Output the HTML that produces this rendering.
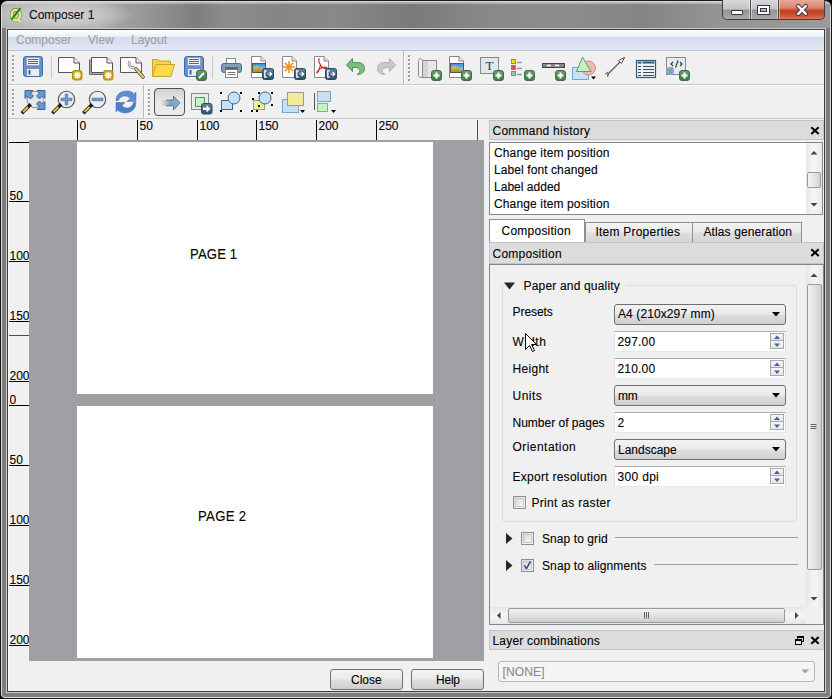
<!DOCTYPE html>
<html><head><meta charset="utf-8">
<style>
*{margin:0;padding:0;box-sizing:border-box}
html,body{width:832px;height:699px;overflow:hidden;background:#000}
body{position:relative;font-family:"Liberation Sans",sans-serif;font-size:12px;color:#000}
.a{position:absolute}
.t{position:absolute;white-space:nowrap;line-height:1;-webkit-text-stroke:0.1px currentColor}
#win{left:0;top:0;width:832px;height:699px;border:1px solid #161616;border-radius:7px 7px 5px 5px;
 background:#7e7e7e;box-shadow:inset 0 0 0 1px #dcdcdc}
#title{left:2px;top:2px;width:828px;height:26px;border-radius:5px 5px 0 0;overflow:hidden;
 background:linear-gradient(90deg,#b4b4b4 0px,#acacac 95px,#8f8f8f 160px,#7e7e7e 195px,#8d8d8d 225px,#858585 280px,#898989 330px,#7a7a7a 410px,#888888 480px,#8d8d8d 560px,#848484 640px,#959595 720px,#9a9a9a 828px)}
#title:before{content:"";position:absolute;left:0;top:0;right:0;height:2px;background:rgba(255,255,255,0.35)}
#glow{left:0;top:0;width:240px;height:28px;background:radial-gradient(ellipse 72px 17px at 60px 13px,rgba(212,212,212,1) 0,rgba(204,204,204,0.8) 50%,rgba(190,190,190,0) 100%)}
#client{left:7px;top:29px;width:818px;height:663px;border:1px solid #404040;background:#f0f0f0;box-shadow:0 0 0 1px #cacaca,inset 1px 0 0 #fafafa}
#menubar{left:8px;top:30px;width:816px;height:21px;border-bottom:1px solid #b9c2d8;
 background:linear-gradient(180deg,#fefefe 0,#f6f8fc 3px,#eceff8 6.5px,#d5dcee 7px,#d9dff0 11px,#dfe5f3 17px,#e2e7f4 20px)}
.menu{color:#a0a0a0;font-size:12px;top:34px}
.tb{left:8px;width:816px;border-bottom:1px solid #c8c8c8;background:#f0f0f0}
.grip{width:3px;background:repeating-linear-gradient(180deg,#a8a8a8 0,#a8a8a8 1px,#f0f0f0 1px,#f0f0f0 4px)}
.sep{width:2px;border-left:1px solid #c6c6c6;border-right:1px solid #fff}
svg{position:absolute;overflow:visible}
</style></head><body>
<div id="win" class="a"></div>
<div id="title" class="a"><div id="glow" class="a"></div></div>
<!-- qgis logo -->
<svg style="left:0;top:0" width="32" height="28" viewBox="0 0 32 28">
 <ellipse cx="15.8" cy="15.2" rx="4.2" ry="5.3" fill="none" stroke="#3a3a20" stroke-width="3.6" opacity="0.55"/>
 <ellipse cx="15.8" cy="15.2" rx="4.2" ry="5.3" fill="none" stroke="#f0f070" stroke-width="2.4"/>
 <path d="M17 19.5L20.5 21.5" stroke="#f0f070" stroke-width="2"/>
 <path d="M11.5 19.5L20.5 8" stroke="#118a11" stroke-width="2"/>
</svg>
<div class="t" style="left:29px;top:9px;font-size:12px;color:#0c0c20">Composer 1</div>
<!-- window buttons -->
<div class="a" style="left:722px;top:0px;width:103px;height:20px;border:1px solid #3e3e3e;border-top:none;border-radius:0 0 5px 5px;overflow:hidden;background:#4a4a4a">
 <div class="a" style="left:0;top:0;width:27px;height:19px;border-right:1px solid rgba(255,255,255,0.5);background:linear-gradient(180deg,#d8d8d8 0,#c4c4c4 45%,#959595 55%,#a8a8a8 100%)"></div>
 <div class="a" style="left:28px;top:0;width:27px;height:19px;border-left:1px solid rgba(255,255,255,0.5);border-right:1px solid rgba(255,255,255,0.4);background:linear-gradient(180deg,#d8d8d8 0,#c4c4c4 45%,#959595 55%,#a8a8a8 100%)"></div>
 <div class="a" style="left:56px;top:0;width:47px;height:19px;border-left:1px solid rgba(255,220,210,0.5);background:linear-gradient(180deg,#e8a898 0,#d98870 40%,#c23c1c 58%,#cc5a3c 85%,#d87a5e 100%)"></div>
</div>
<div class="a" style="left:731px;top:10px;width:12px;height:5px;border:1px solid #35354a;background:#fff;border-radius:1px"></div>
<div class="a" style="left:757px;top:5px;width:13px;height:10px;border:1px solid #35354a;background:#fff"></div>
<div class="a" style="left:760px;top:8px;width:7px;height:4px;border:1px solid #35354a;background:#b8b8b8"></div>
<svg style="left:796px;top:5px" width="12" height="10" viewBox="0 0 12 10">
 <path d="M2.2 1.2L9.8 8.8M9.8 1.2L2.2 8.8" stroke="#33334a" stroke-width="4.4" stroke-linecap="round"/>
 <path d="M2.2 1.2L9.8 8.8M9.8 1.2L2.2 8.8" stroke="#fff" stroke-width="2.4" stroke-linecap="round"/>
</svg>

<div id="client" class="a"></div>
<div id="menubar" class="a"></div>
<div class="t menu" style="left:16px">Composer</div>
<div class="t menu" style="left:88px">View</div>
<div class="t menu" style="left:131px">Layout</div>

<!-- toolbars -->
<div class="a tb" style="top:51px;height:34px"></div>
<div class="a tb" style="top:85px;height:34px;border-top:1px solid #fff"></div>

<svg style="left:0;top:0" width="832" height="120" viewBox="0 0 832 120">
<defs>
 <linearGradient id="gBadge" x1="0" y1="0" x2="0" y2="1"><stop offset="0" stop-color="#6f9d74"/><stop offset="1" stop-color="#3f7a47"/></linearGradient>
 <linearGradient id="gExp" x1="0" y1="0" x2="0" y2="1"><stop offset="0" stop-color="#5f819b"/><stop offset="1" stop-color="#2f506a"/></linearGradient>
 <linearGradient id="gSky" x1="0" y1="0" x2="0" y2="1"><stop offset="0" stop-color="#3b8fd8"/><stop offset="1" stop-color="#bfe2f6"/></linearGradient>
 <linearGradient id="gHill" x1="0" y1="0" x2="0" y2="1"><stop offset="0" stop-color="#d8c070"/><stop offset="1" stop-color="#b09028"/></linearGradient>
 <linearGradient id="gArrow" x1="0" y1="0" x2="1" y2="0"><stop offset="0" stop-color="#5a87a6" stop-opacity="0"/><stop offset="0.55" stop-color="#5a87a6"/><stop offset="1" stop-color="#4f7896"/></linearGradient>
 <linearGradient id="gChk" x1="0" y1="0" x2="0" y2="1"><stop offset="0" stop-color="#cfcfcf"/><stop offset="0.45" stop-color="#e6e6e6"/><stop offset="1" stop-color="#ececec"/></linearGradient>
 <g id="plus"><rect x="0.5" y="0.5" width="10" height="10" rx="2.5" fill="url(#gBadge)" stroke="#3b6e43"/><path d="M5.5 2.5v6M2.5 5.5h6" stroke="#fff" stroke-width="2.2"/></g>
 <g id="exp"><rect x="0.5" y="0.5" width="11" height="11" rx="2" fill="url(#gExp)" stroke="#2a4a60"/><path d="M4.8 2.8H2.8V9.2H4.8" stroke="#fff" stroke-width="1.3" fill="none"/><path d="M5.5 6H9.5M7.5 3.8L9.7 6L7.5 8.2" stroke="#fff" stroke-width="1.2" fill="none"/></g>
 <g id="page"><path d="M0.5 0.5H10L14.5 5V21.5H0.5Z" fill="#fff" stroke="#888"/><path d="M10 0.5V5H14.5" fill="#e8e8e8" stroke="#888"/></g>
 <g id="ast"><path d="M0 -3.6V3.6M-3.6 0H3.6M-2.5 -2.5L2.5 2.5M2.5 -2.5L-2.5 2.5" stroke="#fff" stroke-width="1.5"/></g>
</defs>
<!-- grips -->
<rect x="12" y="55" width="2" height="2" fill="#b8b8b8"/><rect x="13" y="55" width="1" height="1" fill="#8a8a8a"/><rect x="12" y="56" width="1" height="1" fill="#8a8a8a"/><rect x="12" y="59" width="2" height="2" fill="#b8b8b8"/><rect x="13" y="59" width="1" height="1" fill="#8a8a8a"/><rect x="12" y="60" width="1" height="1" fill="#8a8a8a"/><rect x="12" y="63" width="2" height="2" fill="#b8b8b8"/><rect x="13" y="63" width="1" height="1" fill="#8a8a8a"/><rect x="12" y="64" width="1" height="1" fill="#8a8a8a"/><rect x="12" y="67" width="2" height="2" fill="#b8b8b8"/><rect x="13" y="67" width="1" height="1" fill="#8a8a8a"/><rect x="12" y="68" width="1" height="1" fill="#8a8a8a"/><rect x="12" y="71" width="2" height="2" fill="#b8b8b8"/><rect x="13" y="71" width="1" height="1" fill="#8a8a8a"/><rect x="12" y="72" width="1" height="1" fill="#8a8a8a"/><rect x="12" y="75" width="2" height="2" fill="#b8b8b8"/><rect x="13" y="75" width="1" height="1" fill="#8a8a8a"/><rect x="12" y="76" width="1" height="1" fill="#8a8a8a"/><rect x="12" y="79" width="2" height="2" fill="#b8b8b8"/><rect x="13" y="79" width="1" height="1" fill="#8a8a8a"/><rect x="12" y="80" width="1" height="1" fill="#8a8a8a"/>
<rect x="408" y="55" width="2" height="2" fill="#b8b8b8"/><rect x="409" y="55" width="1" height="1" fill="#8a8a8a"/><rect x="408" y="56" width="1" height="1" fill="#8a8a8a"/><rect x="408" y="59" width="2" height="2" fill="#b8b8b8"/><rect x="409" y="59" width="1" height="1" fill="#8a8a8a"/><rect x="408" y="60" width="1" height="1" fill="#8a8a8a"/><rect x="408" y="63" width="2" height="2" fill="#b8b8b8"/><rect x="409" y="63" width="1" height="1" fill="#8a8a8a"/><rect x="408" y="64" width="1" height="1" fill="#8a8a8a"/><rect x="408" y="67" width="2" height="2" fill="#b8b8b8"/><rect x="409" y="67" width="1" height="1" fill="#8a8a8a"/><rect x="408" y="68" width="1" height="1" fill="#8a8a8a"/><rect x="408" y="71" width="2" height="2" fill="#b8b8b8"/><rect x="409" y="71" width="1" height="1" fill="#8a8a8a"/><rect x="408" y="72" width="1" height="1" fill="#8a8a8a"/><rect x="408" y="75" width="2" height="2" fill="#b8b8b8"/><rect x="409" y="75" width="1" height="1" fill="#8a8a8a"/><rect x="408" y="76" width="1" height="1" fill="#8a8a8a"/><rect x="408" y="79" width="2" height="2" fill="#b8b8b8"/><rect x="409" y="79" width="1" height="1" fill="#8a8a8a"/><rect x="408" y="80" width="1" height="1" fill="#8a8a8a"/>
<rect x="12" y="89" width="2" height="2" fill="#b8b8b8"/><rect x="13" y="89" width="1" height="1" fill="#8a8a8a"/><rect x="12" y="90" width="1" height="1" fill="#8a8a8a"/><rect x="12" y="93" width="2" height="2" fill="#b8b8b8"/><rect x="13" y="93" width="1" height="1" fill="#8a8a8a"/><rect x="12" y="94" width="1" height="1" fill="#8a8a8a"/><rect x="12" y="97" width="2" height="2" fill="#b8b8b8"/><rect x="13" y="97" width="1" height="1" fill="#8a8a8a"/><rect x="12" y="98" width="1" height="1" fill="#8a8a8a"/><rect x="12" y="101" width="2" height="2" fill="#b8b8b8"/><rect x="13" y="101" width="1" height="1" fill="#8a8a8a"/><rect x="12" y="102" width="1" height="1" fill="#8a8a8a"/><rect x="12" y="105" width="2" height="2" fill="#b8b8b8"/><rect x="13" y="105" width="1" height="1" fill="#8a8a8a"/><rect x="12" y="106" width="1" height="1" fill="#8a8a8a"/><rect x="12" y="109" width="2" height="2" fill="#b8b8b8"/><rect x="13" y="109" width="1" height="1" fill="#8a8a8a"/><rect x="12" y="110" width="1" height="1" fill="#8a8a8a"/><rect x="12" y="113" width="2" height="2" fill="#b8b8b8"/><rect x="13" y="113" width="1" height="1" fill="#8a8a8a"/><rect x="12" y="114" width="1" height="1" fill="#8a8a8a"/>
<rect x="148" y="89" width="2" height="2" fill="#b8b8b8"/><rect x="149" y="89" width="1" height="1" fill="#8a8a8a"/><rect x="148" y="90" width="1" height="1" fill="#8a8a8a"/><rect x="148" y="93" width="2" height="2" fill="#b8b8b8"/><rect x="149" y="93" width="1" height="1" fill="#8a8a8a"/><rect x="148" y="94" width="1" height="1" fill="#8a8a8a"/><rect x="148" y="97" width="2" height="2" fill="#b8b8b8"/><rect x="149" y="97" width="1" height="1" fill="#8a8a8a"/><rect x="148" y="98" width="1" height="1" fill="#8a8a8a"/><rect x="148" y="101" width="2" height="2" fill="#b8b8b8"/><rect x="149" y="101" width="1" height="1" fill="#8a8a8a"/><rect x="148" y="102" width="1" height="1" fill="#8a8a8a"/><rect x="148" y="105" width="2" height="2" fill="#b8b8b8"/><rect x="149" y="105" width="1" height="1" fill="#8a8a8a"/><rect x="148" y="106" width="1" height="1" fill="#8a8a8a"/><rect x="148" y="109" width="2" height="2" fill="#b8b8b8"/><rect x="149" y="109" width="1" height="1" fill="#8a8a8a"/><rect x="148" y="110" width="1" height="1" fill="#8a8a8a"/><rect x="148" y="113" width="2" height="2" fill="#b8b8b8"/><rect x="149" y="113" width="1" height="1" fill="#8a8a8a"/><rect x="148" y="114" width="1" height="1" fill="#8a8a8a"/>
<!-- separators -->
<path d="M51.5 56v23M212.5 56v23" stroke="#c9c9c9"/>
<path d="M403.5 51v33M143.5 85v33" stroke="#b9b9b9"/><path d="M404.5 51v33M144.5 85v33" stroke="#fff"/>
<!-- save -->
<g id="save"><rect x="23.5" y="56.5" width="19" height="20" rx="2.5" fill="#6892c6" stroke="#3f6da6"/>
<rect x="26.5" y="57.5" width="13" height="8" fill="#f2f2f2" stroke="#8ca4c0"/>
<path d="M28 59.5h10M28 61.5h10M28 63.5h10" stroke="#555" stroke-width="0.9"/>
<rect x="27" y="69" width="12" height="7" fill="#ececec"/><rect x="28.5" y="70" width="2" height="4.5" fill="#36628f"/></g>
<!-- new composer -->
<path d="M58.5 57.5H74L79.5 63V72.5H58.5Z" fill="#fff" stroke="#555"/><path d="M74 57.5V63H79.5" fill="#eee" stroke="#555"/>
<g transform="translate(72,70)"><rect x="0.5" y="0.5" width="9.5" height="9.5" rx="2" fill="#c9a21a" stroke="#b5900f"/><g transform="translate(5.25,5.25)"><use href="#ast"/></g></g>
<!-- duplicate -->
<path d="M89.5 59.5V74.5H104" fill="none" stroke="#666" stroke-width="1"/><path d="M90.5 59.5V73.5H104" fill="none" stroke="#aaa"/>
<path d="M91.5 57.5H107L112.5 63V72.5H91.5Z" fill="#fff" stroke="#555"/><path d="M107 57.5V63H112.5" fill="#eee" stroke="#555"/>
<g transform="translate(103,70)"><rect x="0.5" y="0.5" width="9.5" height="9.5" rx="2" fill="#c9a21a" stroke="#b5900f"/><g transform="translate(5.25,5.25)"><use href="#ast"/></g></g>
<!-- manager -->
<path d="M120.5 57.5H136L141.5 63V72.5H120.5Z" fill="#fff" stroke="#555"/><path d="M136 57.5V63H141.5" fill="#eee" stroke="#555"/>
<path d="M136 69L143 77" stroke="#444" stroke-width="3.6" stroke-linecap="round"/><path d="M136 69L143 77" stroke="#e8cc6a" stroke-width="2.2" stroke-linecap="round"/>
<path d="M130 61.5a3.5 3.5 0 1 0 5 5" fill="none" stroke="#777" stroke-width="2.6"/><path d="M130 61.5a3.5 3.5 0 1 0 5 5" fill="none" stroke="#e6e6e6" stroke-width="1.3"/>
<!-- open folder -->
<path d="M152.5 76.5V59.5H158L159 61H170.5V64" fill="#f5d34a" stroke="#c9a62a"/>
<path d="M152.5 76.5L156 64.5H174.5L171 76.5Z" fill="#ffd84c" stroke="#c9a62a"/>
<!-- save as template -->
<rect x="184.5" y="56.5" width="19" height="20" rx="2.5" fill="#6892c6" stroke="#3f6da6"/>
<rect x="187.5" y="57.5" width="13" height="8" fill="#f2f2f2" stroke="#8ca4c0"/>
<path d="M189 59.5h10M189 61.5h10M189 63.5h10" stroke="#555" stroke-width="0.9"/>
<rect x="188" y="69" width="12" height="7" fill="#ececec"/><rect x="189.5" y="70" width="2" height="4.5" fill="#36628f"/>
<rect x="196.5" y="70.5" width="10" height="10" rx="2.5" fill="url(#gBadge)" stroke="#3b6e43"/><path d="M199 78L204 73" stroke="#fff" stroke-width="1.8"/>
<!-- print -->
<rect x="226.5" y="58.5" width="9" height="6" fill="#fff" stroke="#888"/>
<rect x="221.5" y="63.5" width="20" height="9" rx="2.5" fill="#7e9dba" stroke="#4f6f8f"/>
<rect x="225.5" y="69.5" width="12" height="8" fill="#fff" stroke="#888"/><path d="M227.5 72.5h8M227.5 74.5h8" stroke="#777"/>
<rect x="225" y="67" width="13" height="2.5" fill="#666"/>
<!-- export image -->
<g transform="translate(251,56)"><use href="#page"/><rect x="1" y="7" width="14" height="10" fill="#555"/><rect x="2" y="8" width="12" height="8" fill="url(#gSky)"/><path d="M2 11.5L5.5 9.5L11 13L14 14V16H2Z" fill="url(#gHill)"/></g>
<g transform="translate(262,68)"><use href="#exp"/></g>
<!-- export svg -->
<g transform="translate(282,56)"><use href="#page"/><g transform="translate(7,11)"><path d="M0 -6V6M-6 0H6M-4.2 -4.2L4.2 4.2M4.2 -4.2L-4.2 4.2" stroke="#e8951a" stroke-width="1.6"/><circle r="2" fill="#e8951a"/></g></g>
<g transform="translate(294,68)"><use href="#exp"/></g>
<!-- export pdf -->
<g transform="translate(314,56)"><use href="#page"/><path d="M5.5 2.5C3.5 4 6 9 8 11C9.5 12.5 12 13 13 12C12 10.5 8 11 5 13.5C3 15.5 2.5 17 3 17C4.5 16 6 11 6.5 8" fill="none" stroke="#c0282a" stroke-width="1.1"/></g>
<g transform="translate(325,68)"><use href="#exp"/></g>
<!-- undo -->
<path d="M346.5 65L352.5 58.5V62.5H358C362 62.5 364.5 65 364.5 68.5C364.5 72 362 74.5 357 74.5C360 73 360.5 70.5 359 69C358 68 356.5 67.5 355 67.5H352.5V71.5Z" fill="#7dbb80" stroke="#4f9455"/>
<!-- redo -->
<path d="M395.5 65L389.5 58.5V62.5H384C380 62.5 377.5 65 377.5 68.5C377.5 72 380 74.5 385 74.5C382 73 381.5 70.5 383 69C384 68 385.5 67.5 387 67.5H389.5V71.5Z" fill="#c8c8c8" stroke="#b0b0b0"/>
<!-- add map -->
<path d="M421 60.5H436.5V77.5H422" fill="#e7e7e7" stroke="#888"/>
<rect x="423" y="61" width="5" height="16" fill="#d4d4d4"/>
<path d="M418.5 61.5C418.5 57.5 422.5 57.5 422.5 61.5V76C422.5 78 418.5 78 418.5 75.5Z" fill="#f4f4f4" stroke="#888"/>
<g transform="translate(431,70)"><use href="#plus"/></g>
<!-- add picture -->
<g transform="translate(449,56)"><use href="#page"/><rect x="1" y="7" width="14" height="10" fill="#555"/><rect x="2" y="8" width="12" height="8" fill="url(#gSky)"/><path d="M2 11.5L5.5 9.5L11 13L14 14V16H2Z" fill="url(#gHill)"/></g>
<g transform="translate(461,70)"><use href="#plus"/></g>
<!-- add label -->
<rect x="480.5" y="57.5" width="18" height="16" fill="#dfe7f0" stroke="#888"/>
<text x="489.5" y="70" font-family="Liberation Serif" font-size="13" text-anchor="middle" fill="#333">T</text>
<g transform="translate(493,70)"><use href="#plus"/></g>
<!-- add legend -->
<rect x="511.5" y="59.5" width="4" height="4" fill="#f4e100" stroke="#888"/>
<rect x="511.5" y="65.5" width="4" height="4" fill="#e05050" stroke="#888"/>
<rect x="511.5" y="71.5" width="4" height="4" fill="#90d090" stroke="#888"/>
<path d="M517 62.5h5M517 68.5h5M517 74.5h5" stroke="#999" stroke-width="1.5"/>
<g transform="translate(524,70)"><use href="#plus"/></g>
<!-- add scalebar -->
<rect x="542.5" y="63.5" width="22" height="4" fill="#888" stroke="#444"/><path d="M547 65.5h4M555 65.5h4" stroke="#fff" stroke-width="1.6"/>
<g transform="translate(555,70)"><use href="#plus"/></g>
<!-- add shapes -->
<rect x="572.5" y="67.5" width="16" height="12" fill="#c6e0f4" stroke="#7aa4c8"/>
<circle cx="588.5" cy="68" r="7" fill="#f6b4b4" stroke="#d88888"/>
<path d="M582.5 57L576.5 71.5H591Z" fill="#c6f0c0" stroke="#62a060"/>
<path d="M591 76.5h5l-2.5 3z" fill="#000"/>
<!-- arrow -->
<path d="M607 75L624.5 57.5" stroke="#555" stroke-width="1.1"/>
<path d="M624.5 57.5L618.5 60.5L621.5 63.5Z" fill="#eee" stroke="#555"/>
<path d="M605 74l3 -2M607.5 77l1-3" stroke="#555"/>
<!-- table -->
<rect x="636.5" y="60.5" width="19" height="17" fill="#eef2f6" stroke="#3c5a72" stroke-width="1.2"/>
<rect x="637" y="61" width="18" height="3" fill="#9cc6e6"/><path d="M638 62.5h3M643 62.5h11" stroke="#30506a" stroke-width="1.4"/>
<path d="M638 66.5h3M643 66.5h11M638 69.5h3M643 69.5h11M638 72.5h3M643 72.5h11M638 75.5h3M643 75.5h11" stroke="#30506a" stroke-width="1"/>
<!-- html -->
<rect x="666.5" y="57.5" width="19" height="17" fill="#e4ebf2" stroke="#8a8a8a"/>
<path d="M673 62l-2 2 2 2M680 62l2 2-2 2M678 60.5l-2.5 7" stroke="#333" stroke-width="1.1" fill="none"/>
<circle cx="670" cy="71" r="4" fill="#9a9af0"/><path d="M667 69c2 0 2 2 3 2s1-3 3-3M669 74c1-1 2-2 3-1" stroke="#5cbc5c" stroke-width="1.6" fill="none"/>
<g transform="translate(679,70)"><use href="#plus"/></g>

<!-- toolbar 2 -->
<!-- zoom full -->
<circle cx="35.2" cy="99.5" r="8.2" fill="#e8e8e8" stroke="#8a8a8a" stroke-width="1"/>
<path d="M25 90.5H33L30.5 93L33.5 96L30.5 99L27.5 96L25 98.5Z" fill="#6a98cc" stroke="#2f5f94" stroke-width="0.9" stroke-linejoin="round"/>
<path d="M45 90.5H37L39.5 93L36.5 96L39.5 99L42.5 96L45 98.5Z" fill="#6a98cc" stroke="#2f5f94" stroke-width="0.9" stroke-linejoin="round"/>
<path d="M45 109.5H37L39.5 107L36.5 104L39.5 101L42.5 104L45 101.5Z" fill="#6a98cc" stroke="#2f5f94" stroke-width="0.9" stroke-linejoin="round"/>
<path d="M29.5 105.5L23 112" stroke="#1a1a1a" stroke-width="3.4" stroke-linecap="square"/><path d="M28 107L23 112" stroke="#f2c832" stroke-width="1.8"/>
<!-- zoom in -->
<circle cx="66.5" cy="99.5" r="8.2" fill="#eeeeee" stroke="#555" stroke-width="1.1"/>
<path d="M61 98.2H65.2V94H67.8V98.2H72V100.8H67.8V105H65.2V100.8H61Z" fill="#6a98cc" stroke="#3f6fa6" stroke-width="0.6"/>
<path d="M60 105.5L53.5 112" stroke="#1a1a1a" stroke-width="3.4" stroke-linecap="square"/><path d="M58.5 107L53.5 112" stroke="#f2c832" stroke-width="1.8"/>
<!-- zoom out -->
<circle cx="97.5" cy="99.5" r="8.2" fill="#eeeeee" stroke="#555" stroke-width="1.1"/>
<path d="M92 98.2H103V100.8H92Z" fill="#6a98cc" stroke="#3f6fa6" stroke-width="0.6"/>
<path d="M91 105.5L84.5 112" stroke="#1a1a1a" stroke-width="3.4" stroke-linecap="square"/><path d="M89.5 107L84.5 112" stroke="#f2c832" stroke-width="1.8"/>
<!-- refresh -->
<path d="M116 100.5C116 94 121 91 127 91C130.5 91 133 92.5 134.5 94L136 92V101.5H127L130 98.5C129 97 127.5 96 125 96C121.5 96 119.5 98 118.5 100.5Z" fill="#5b8fd0" stroke="#3d6fb0" stroke-width="0.5"/>
<path d="M136 102.5C136 109 131 113 125 113C121.5 113 119 111.5 117.5 110L116 112V102.5H125L122 105.5C123 107 124.5 108 127 108C130.5 108 132.5 106 133.5 102.5Z" fill="#4a80c4" stroke="#3d6fb0" stroke-width="0.5"/>
<!-- select (checked) -->
<rect x="154.5" y="88.5" width="30" height="27" rx="3.5" fill="url(#gChk)" stroke="#505050"/>
<defs><linearGradient id="gArr2" x1="0" y1="0" x2="1" y2="0"><stop offset="0" stop-color="#7fa3bf" stop-opacity="0"/><stop offset="0.5" stop-color="#7fa3bf"/><stop offset="1" stop-color="#8eb0c8"/></linearGradient></defs>
<path d="M161 100H173.5V96L180 103L173.5 110V105.8H161Z" fill="url(#gArr2)"/>
<path d="M166 100H173.5V96L180 103L173.5 110V105.8H166" fill="none" stroke="#3f6580" stroke-width="0.9" stroke-opacity="0.85"/>
<!-- move content -->
<rect x="191.5" y="93.5" width="17" height="16" fill="#ececec" stroke="#8a8a8a"/>
<rect x="195.5" y="97.5" width="9" height="9" fill="#c4f4c4" stroke="#5f905f"/>
<rect x="201.5" y="103.5" width="10.5" height="10.5" rx="2" fill="url(#gExp)" stroke="#2a4a60"/>
<path d="M203 107.5h3.5v-2.5l4 3.8-4 3.8v-2.5h-3.5z" fill="#fff"/>
<!-- select all -->
<rect x="221.5" y="100.5" width="11" height="9" fill="#c6e0f4" stroke="#3e6888"/>
<circle cx="234" cy="98" r="6" fill="#c6e0f4" stroke="#3e6888"/>
<path d="M220 92h2v2h-2zM240 92h2v2h-2zM220 110h2v2h-2zM240 110h2v2h-2z" fill="#000"/>
<!-- select2 -->
<rect x="253.5" y="100.5" width="11" height="9" fill="#f0ec9a" stroke="#999"/>
<circle cx="265" cy="98" r="6" fill="#c6e0f4" stroke="#3e6888"/>
<path d="M252 98h2v2h-2zM258 105h2v2h-2zM251 110h2v2h-2zM271 92h2v2h-2zM258 92h2v2h-2zM271 104h2v2h-2zM256 110h2v2h-2z" fill="#000"/>
<!-- raise -->
<rect x="282.5" y="99.5" width="16" height="13" fill="#c6e0f4" stroke="#7aa4c8"/>
<rect x="287.5" y="92.5" width="16" height="13" fill="#f0ec9a" stroke="#999"/>
<path d="M300 110h5l-2.5 3z" fill="#000"/>
<!-- align -->
<path d="M314.5 93v17" stroke="#555"/>
<rect x="317.5" y="91.5" width="13" height="10" fill="#c6e0f4" stroke="#7aa4c8"/>
<rect x="317.5" y="103.5" width="10" height="8" fill="#c6f4c6" stroke="#7ab87a"/>
<path d="M331 110h5l-2.5 3z" fill="#000"/>
</svg>

<div class="a" style="left:29px;top:140px;width:455px;height:521px;background:#a0a0a4"></div>
<div class="a" style="left:77px;top:142px;width:356px;height:252px;background:#fff"></div>
<div class="a" style="left:77px;top:406px;width:356px;height:252px;background:#fff"></div>
<svg style="left:0;top:0" width="832" height="699" viewBox="0 0 832 699">
<path d="M77.5 120V140" stroke="#000"/>
<path d="M137.5 120V140" stroke="#000"/>
<path d="M197.5 120V140" stroke="#000"/>
<path d="M256.5 120V140" stroke="#000"/>
<path d="M316.5 120V140" stroke="#000"/>
<path d="M376.5 120V140" stroke="#000"/>
<path d="M477.5 120V140" stroke="#f00"/>
<path d="M9 142.5H29" stroke="#000"/>
<path d="M9 201.5H29" stroke="#000"/>
<path d="M9 261.5H29" stroke="#000"/>
<path d="M9 321.5H29" stroke="#000"/>
<path d="M9 381.5H29" stroke="#000"/>
<path d="M9 405.5H29" stroke="#000"/>
<path d="M9 465.5H29" stroke="#000"/>
<path d="M9 525.5H29" stroke="#000"/>
<path d="M9 585.5H29" stroke="#000"/>
<path d="M9 645.5H29" stroke="#000"/>
<path d="M9 335.5H29" stroke="#f00"/>
</svg>
<div class="t" style="left:79.5px;top:120.00px;font-size:12px;color:#000;">0</div>
<div class="t" style="left:139.5px;top:120.00px;font-size:12px;color:#000;">50</div>
<div class="t" style="left:199.5px;top:120.00px;font-size:12px;color:#000;">100</div>
<div class="t" style="left:258.5px;top:120.00px;font-size:12px;color:#000;">150</div>
<div class="t" style="left:318.5px;top:120.00px;font-size:12px;color:#000;">200</div>
<div class="t" style="left:378.5px;top:120.00px;font-size:12px;color:#000;">250</div>
<div class="t" style="left:9.5px;top:190.00px;font-size:12px;color:#000;width:19.5px;overflow:hidden">50</div>
<div class="t" style="left:9.5px;top:250.00px;font-size:12px;color:#000;width:19.5px;overflow:hidden">100</div>
<div class="t" style="left:9.5px;top:310.00px;font-size:12px;color:#000;width:19.5px;overflow:hidden">150</div>
<div class="t" style="left:9.5px;top:370.00px;font-size:12px;color:#000;width:19.5px;overflow:hidden">200</div>
<div class="t" style="left:9.5px;top:394.00px;font-size:12px;color:#000;width:19.5px;overflow:hidden">0</div>
<div class="t" style="left:9.5px;top:454.00px;font-size:12px;color:#000;width:19.5px;overflow:hidden">50</div>
<div class="t" style="left:9.5px;top:514.00px;font-size:12px;color:#000;width:19.5px;overflow:hidden">100</div>
<div class="t" style="left:9.5px;top:574.00px;font-size:12px;color:#000;width:19.5px;overflow:hidden">150</div>
<div class="t" style="left:9.5px;top:634.00px;font-size:12px;color:#000;width:19.5px;overflow:hidden">200</div>
<div class="t" style="left:189.5px;top:246.00px;font-size:15px;color:#000;transform:scaleX(0.88);transform-origin:0 0;letter-spacing:0.1px">PAGE 1</div>
<div class="t" style="left:198.3px;top:508.00px;font-size:15px;color:#000;transform:scaleX(0.88);transform-origin:0 0;letter-spacing:0.3px">PAGE 2</div>
<div class="a" style="left:489px;top:120px;width:335px;height:20px;background:#dcdcdc;border:1px solid #c4c4c4"></div>
<div class="t" style="left:492.5px;top:125.00px;font-size:12px;color:#000;letter-spacing:0.24px;">Command history</div>
<svg style="left:0;top:0" width="832" height="699" viewBox="0 0 832 699"><path d="M811.3 127.19999999999999L818.7 134.0M818.7 127.19999999999999L811.3 134.0" stroke="#000" stroke-width="2"/></svg>
<div class="a" style="left:489px;top:142px;width:334px;height:73px;background:#fff;border:1px solid #828790"></div>
<div class="t" style="left:494px;top:147.00px;font-size:12px;color:#000;letter-spacing:0.14px;">Change item position</div>
<div class="t" style="left:494px;top:163.85px;font-size:12px;color:#000;letter-spacing:0.09px;">Label font changed</div>
<div class="t" style="left:494px;top:180.70px;font-size:12px;color:#000;letter-spacing:0.02px;">Label added</div>
<div class="t" style="left:494px;top:197.55px;font-size:12px;color:#000;letter-spacing:0.14px;">Change item position</div>
<div class="a" style="left:806px;top:143px;width:16px;height:71px;background:linear-gradient(90deg,#e8e8e8,#f4f4f4 40%,#f4f4f4 60%,#e8e8e8)"></div>
<div class="a" style="left:807px;top:172px;width:14px;height:16px;background:linear-gradient(90deg,#f4f4f4,#e6e6e6 50%,#d2d2d2);border:1px solid #9a9a9a;border-radius:2px"></div>
<svg style="left:0;top:0" width="832" height="699" viewBox="0 0 832 699"><path d="M810.5 154.5h7l-3.5 -3.5z" fill="#404040"/><path d="M810.5 203h7l-3.5 3.5z" fill="#404040"/></svg>
<div class="a" style="left:585px;top:222px;width:108px;height:20px;background:linear-gradient(180deg,#f3f3f3 0,#ebebeb 45%,#dddddd 55%,#d5d5d5 100%);border:1px solid #8e8f8f;border-bottom:none"></div>
<div class="a" style="left:692px;top:222px;width:110px;height:20px;background:linear-gradient(180deg,#f3f3f3 0,#ebebeb 45%,#dddddd 55%,#d5d5d5 100%);border:1px solid #8e8f8f;border-bottom:none"></div>
<div class="a" style="left:489px;top:219px;width:96px;height:24px;background:#fff;border:1px solid #8e8f8f;border-bottom:none"></div>
<div class="t" style="left:501.5px;top:224.50px;font-size:12px;color:#000;letter-spacing:0.24px;">Composition</div>
<div class="t" style="left:595.5px;top:225.50px;font-size:12px;color:#000;letter-spacing:0.22px;">Item Properties</div>
<div class="t" style="left:703.5px;top:225.50px;font-size:12px;color:#000;letter-spacing:0.11px;">Atlas generation</div>
<div class="a" style="left:489px;top:242px;width:335px;height:22px;background:#dcdcdc;border:1px solid #c4c4c4"></div>
<div class="t" style="left:492.5px;top:248.00px;font-size:12px;color:#000;letter-spacing:0.24px;">Composition</div>
<svg style="left:0;top:0" width="832" height="699" viewBox="0 0 832 699"><path d="M811.3 249.2L818.7 256.0M818.7 249.2L811.3 256.0" stroke="#000" stroke-width="2"/></svg>
<div class="a" style="left:489px;top:264px;width:335px;height:361px;background:#f0f0f0;border:1px solid #828790"></div>
<div class="a" style="left:806px;top:265px;width:17px;height:342px;background:linear-gradient(90deg,#e6e6e6,#f3f3f3 40%,#f3f3f3 60%,#e6e6e6)"></div>
<div class="a" style="left:807px;top:284px;width:15px;height:286px;background:linear-gradient(90deg,#f2f2f2,#e4e4e4 45%,#cfcfcf);border:1px solid #9a9a9a;border-radius:2px"></div>
<div class="a" style="left:490px;top:607px;width:316px;height:17px;background:linear-gradient(180deg,#e6e6e6,#f3f3f3 40%,#f3f3f3 60%,#e6e6e6)"></div>
<div class="a" style="left:508px;top:608px;width:277px;height:15px;background:linear-gradient(180deg,#f2f2f2,#e4e4e4 45%,#cfcfcf);border:1px solid #9a9a9a;border-radius:2px"></div>
<div class="a" style="left:806px;top:607px;width:17px;height:17px;background:#f0f0f0"></div>
<svg style="left:0;top:0" width="832" height="699" viewBox="0 0 832 699">
<path d="M810.5 277h7l-3.5 -3.5z" fill="#404040"/><path d="M810.5 597h7l-3.5 3.5z" fill="#404040"/>
<path d="M810.5 424.5h6M810.5 426.5h6M810.5 428.5h6" stroke="#606060" stroke-width="1"/>
<path d="M497 615.5l3.5 -3.5v7z" fill="#404040"/><path d="M798.5 615.5l-3.5 -3.5v7z" fill="#404040"/>
<path d="M644.5 612v6.5M646.5 612v6.5M648.5 612v6.5" stroke="#606060" stroke-width="1"/>
</svg>
<div class="a" style="left:502px;top:285px;width:295px;height:237px;border:1px solid #d5dfe5;border-radius:3px"></div>
<div class="a" style="left:505px;top:280px;width:121px;height:12px;background:#f0f0f0"></div>
<svg style="left:0;top:0" width="832" height="699" viewBox="0 0 832 699"><path d="M504 282.5h11l-5.5 7z" fill="#262626"/></svg>
<div class="t" style="left:523.5px;top:280.00px;font-size:12px;color:#000;letter-spacing:0.18px;">Paper and quality</div>
<div class="t" style="left:512.5px;top:306.00px;font-size:12px;color:#000;letter-spacing:-0.06px;">Presets</div>
<div class="t" style="left:512.5px;top:336.00px;font-size:12px;color:#000;letter-spacing:0.71px;">Width</div>
<div class="t" style="left:512.5px;top:363.00px;font-size:12px;color:#000;letter-spacing:0.30px;">Height</div>
<div class="t" style="left:512.5px;top:390.00px;font-size:12px;color:#000;letter-spacing:0.49px;">Units</div>
<div class="t" style="left:512.5px;top:417.00px;font-size:12px;color:#000;">Number of pages</div>
<div class="t" style="left:512.5px;top:441.00px;font-size:12px;color:#000;letter-spacing:0.45px;">Orientation</div>
<div class="t" style="left:512.5px;top:471.00px;font-size:12px;color:#000;letter-spacing:0.27px;">Export resolution</div>
<div class="a" style="left:614px;top:304px;width:172px;height:21px;background:linear-gradient(180deg,#f2f2f2 0,#ebebeb 45%,#dddddd 55%,#cfcfcf 100%);border:1px solid #707070;border-radius:3px"></div>
<svg style="left:0;top:0" width="832" height="699" viewBox="0 0 832 699"><path d="M772 312h8l-4 4.5z" fill="#000"/></svg>
<div class="t" style="left:618px;top:308.00px;font-size:12px;color:#000;letter-spacing:0.10px;">A4 (210x297 mm)</div>
<div class="a" style="left:614px;top:331px;width:172px;height:21px;background:#fff;border:1px solid;border-color:#abadb3 #dbdfe6 #e3e9ef #e2e3ea"></div>
<div class="a" style="left:770px;top:333px;width:14px;height:8px;background:linear-gradient(180deg,#f6f6f6,#e6e6e6);border:1px solid #a8a8a8"></div>
<div class="a" style="left:770px;top:341px;width:14px;height:8px;background:linear-gradient(180deg,#f6f6f6,#e6e6e6);border:1px solid #a8a8a8;border-top:none"></div>
<svg style="left:0;top:0" width="832" height="699" viewBox="0 0 832 699"><path d="M774 339h6l-3 -3.5z" fill="#4a5fa8"/><path d="M774 343.5h6l-3 3.5z" fill="#4a5fa8"/></svg>
<div class="t" style="left:617.5px;top:336.00px;font-size:12px;color:#000;letter-spacing:0.18px;">297.00</div>
<div class="a" style="left:614px;top:358px;width:172px;height:21px;background:#fff;border:1px solid;border-color:#abadb3 #dbdfe6 #e3e9ef #e2e3ea"></div>
<div class="a" style="left:770px;top:360px;width:14px;height:8px;background:linear-gradient(180deg,#f6f6f6,#e6e6e6);border:1px solid #a8a8a8"></div>
<div class="a" style="left:770px;top:368px;width:14px;height:8px;background:linear-gradient(180deg,#f6f6f6,#e6e6e6);border:1px solid #a8a8a8;border-top:none"></div>
<svg style="left:0;top:0" width="832" height="699" viewBox="0 0 832 699"><path d="M774 366h6l-3 -3.5z" fill="#4a5fa8"/><path d="M774 370.5h6l-3 3.5z" fill="#4a5fa8"/></svg>
<div class="t" style="left:617.5px;top:363.00px;font-size:12px;color:#000;letter-spacing:0.18px;">210.00</div>
<div class="a" style="left:614px;top:385px;width:172px;height:21px;background:linear-gradient(180deg,#f2f2f2 0,#ebebeb 45%,#dddddd 55%,#cfcfcf 100%);border:1px solid #707070;border-radius:3px"></div>
<svg style="left:0;top:0" width="832" height="699" viewBox="0 0 832 699"><path d="M772 393h8l-4 4.5z" fill="#000"/></svg>
<div class="t" style="left:618px;top:390.00px;font-size:12px;color:#000;letter-spacing:-0.29px;">mm</div>
<div class="a" style="left:614px;top:412px;width:172px;height:21px;background:#fff;border:1px solid;border-color:#abadb3 #dbdfe6 #e3e9ef #e2e3ea"></div>
<div class="a" style="left:770px;top:414px;width:14px;height:8px;background:linear-gradient(180deg,#f6f6f6,#e6e6e6);border:1px solid #a8a8a8"></div>
<div class="a" style="left:770px;top:422px;width:14px;height:8px;background:linear-gradient(180deg,#f6f6f6,#e6e6e6);border:1px solid #a8a8a8;border-top:none"></div>
<svg style="left:0;top:0" width="832" height="699" viewBox="0 0 832 699"><path d="M774 420h6l-3 -3.5z" fill="#4a5fa8"/><path d="M774 424.5h6l-3 3.5z" fill="#4a5fa8"/></svg>
<div class="t" style="left:617.5px;top:417.00px;font-size:12px;color:#000;letter-spacing:-0.17px;">2</div>
<div class="a" style="left:614px;top:439px;width:172px;height:21px;background:linear-gradient(180deg,#f2f2f2 0,#ebebeb 45%,#dddddd 55%,#cfcfcf 100%);border:1px solid #707070;border-radius:3px"></div>
<svg style="left:0;top:0" width="832" height="699" viewBox="0 0 832 699"><path d="M772 447h8l-4 4.5z" fill="#000"/></svg>
<div class="t" style="left:618px;top:444.00px;font-size:12px;color:#000;">Landscape</div>
<div class="a" style="left:614px;top:466px;width:172px;height:21px;background:#fff;border:1px solid;border-color:#abadb3 #dbdfe6 #e3e9ef #e2e3ea"></div>
<div class="a" style="left:770px;top:468px;width:14px;height:8px;background:linear-gradient(180deg,#f6f6f6,#e6e6e6);border:1px solid #a8a8a8"></div>
<div class="a" style="left:770px;top:476px;width:14px;height:8px;background:linear-gradient(180deg,#f6f6f6,#e6e6e6);border:1px solid #a8a8a8;border-top:none"></div>
<svg style="left:0;top:0" width="832" height="699" viewBox="0 0 832 699"><path d="M774 474h6l-3 -3.5z" fill="#4a5fa8"/><path d="M774 478.5h6l-3 3.5z" fill="#4a5fa8"/></svg>
<div class="t" style="left:617.5px;top:471.00px;font-size:12px;color:#000;letter-spacing:0.32px;">300 dpi</div>
<div class="a" style="left:513px;top:496px;width:13px;height:13px;background:linear-gradient(135deg,#dcdcdc,#f8f8f8);border:1px solid #8f8f8f"></div>
<div class="a" style="left:515px;top:498px;width:9px;height:9px;background:linear-gradient(135deg,#d8d8d8,#f6f6f6);border:1px solid #c8c8c8"></div>
<div class="t" style="left:531.5px;top:497.00px;font-size:12px;color:#000;letter-spacing:0.31px;">Print as raster</div>
<svg style="left:0;top:0" width="832" height="699" viewBox="0 0 832 699"><path d="M506 533v11l6.5 -5.5z" fill="#262626"/><path d="M506 560v11l6.5 -5.5z" fill="#262626"/><path d="M615 537.5H798M654 564.5H798" stroke="#a0a0a0"/></svg>
<div class="a" style="left:521px;top:532px;width:13px;height:13px;background:linear-gradient(135deg,#dcdcdc,#f8f8f8);border:1px solid #8f8f8f"></div>
<div class="a" style="left:523px;top:534px;width:9px;height:9px;background:linear-gradient(135deg,#d8d8d8,#f6f6f6);border:1px solid #c8c8c8"></div>
<div class="a" style="left:521px;top:559px;width:13px;height:13px;background:linear-gradient(135deg,#dcdcdc,#f8f8f8);border:1px solid #8f8f8f"></div>
<div class="a" style="left:523px;top:561px;width:9px;height:9px;background:linear-gradient(135deg,#d8d8d8,#f6f6f6);border:1px solid #c8c8c8"></div>
<svg style="left:521px;top:559px" width="13" height="13" viewBox="0 0 13 13"><path d="M3.5 6.5L5.5 9.5L9.5 2.5" stroke="#3c4e9c" stroke-width="1.6" fill="none"/></svg>
<div class="t" style="left:542px;top:533.00px;font-size:12px;color:#000;letter-spacing:0.08px;">Snap to grid</div>
<div class="t" style="left:542px;top:560.00px;font-size:12px;color:#000;letter-spacing:0.10px;">Snap to alignments</div>
<div class="a" style="left:489px;top:630px;width:335px;height:20px;background:#dcdcdc;border:1px solid #c4c4c4"></div>
<div class="t" style="left:492.5px;top:635.00px;font-size:12px;color:#000;letter-spacing:0.19px;">Layer combinations</div>
<svg style="left:0;top:0" width="832" height="699" viewBox="0 0 832 699">
<path d="M811.3 637L818.7 643.8M818.7 637L811.3 643.8" stroke="#000" stroke-width="2"/>
<path d="M797.5 641V636.5H803.5V641.5H801.5" fill="none" stroke="#000" stroke-width="1"/><rect x="797" y="636" width="7" height="2" fill="#000"/>
<rect x="795.5" y="639.5" width="6" height="5" fill="#e8e8e8" stroke="#000" stroke-width="1"/><rect x="795" y="639" width="7" height="2" fill="#000"/>
</svg>
<div class="a" style="left:498px;top:661px;width:317px;height:21px;background:#f4f4f4;border:1px solid #b8b8b8;border-radius:3px"></div>
<div class="t" style="left:502.5px;top:666.00px;font-size:12px;color:#8a8a8a;letter-spacing:0.13px;">[NONE]</div>
<svg style="left:0;top:0" width="832" height="699" viewBox="0 0 832 699"><path d="M801.2 669.5h8l-4 4z" fill="#a0a0a0"/></svg>
<div class="a" style="left:330px;top:669px;width:73px;height:21px;background:linear-gradient(180deg,#f2f2f2 0,#ebebeb 45%,#dddddd 55%,#cfcfcf 100%);border:1px solid #707070;border-radius:3px"></div>
<div class="t" style="left:351px;top:674.00px;font-size:12px;color:#000;">Close</div>
<div class="a" style="left:411px;top:669px;width:73px;height:21px;background:linear-gradient(180deg,#f2f2f2 0,#ebebeb 45%,#dddddd 55%,#cfcfcf 100%);border:1px solid #707070;border-radius:3px"></div>
<div class="t" style="left:436px;top:674.00px;font-size:12px;color:#000;letter-spacing:-0.23px;">Help</div>
<svg style="left:525px;top:333px" width="14" height="20" viewBox="0 0 14 20"><path d="M0.5 0.5V16.5L4.5 12.5L7.5 18.5L9.5 17.5L6.5 11.5H11.5Z" fill="#fff" stroke="#000" stroke-width="1" stroke-linejoin="miter"/></svg>
</body></html>
